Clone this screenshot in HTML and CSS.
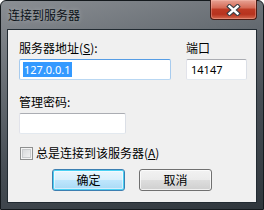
FILE: index.html
```html
<!DOCTYPE html>
<html lang="zh-CN">
<head>
    <meta charset="UTF-8">
    <title>连接到服务器</title>
    <link rel="stylesheet" href="styles.css">
</head>
<body>
    <div class="window">
        <div class="titlebar">
            <span class="title">连接到服务器</span>
            <button class="close" aria-label="关闭">
                <svg width="15" height="12" viewBox="0 0 15 12">
                    <path d="M3.5 2.5 L11.5 9.5 M11.5 2.5 L3.5 9.5" stroke="#3a3f45" stroke-width="4.6" stroke-linecap="square"/>
                    <path d="M3.5 2.5 L11.5 9.5 M11.5 2.5 L3.5 9.5" stroke="#ffffff" stroke-width="2.4" stroke-linecap="square"/>
                </svg>
            </button>
        </div>
        <div class="client">
            <div class="row-top">
                <div class="field">
                    <label class="label">服务器地址(<u>S</u>):</label>
                    <div class="input input-focus input-address"><span class="selected">127.0.0.1</span></div>
                </div>
                <div class="field">
                    <label class="label">端口</label>
                    <div class="input input-port">14147</div>
                </div>
            </div>
            <div class="field field-pass">
                <label class="label">管理密码:</label>
                <div class="input input-pass"></div>
            </div>
            <label class="check-row">
                <span class="checkbox"></span>
                <span class="label">总是连接到该服务器(<u>A</u>)</span>
            </label>
            <div class="buttons">
                <button class="btn btn-default">确定</button>
                <button class="btn">取消</button>
            </div>
        </div>
    </div>
</body>
</html>
```

FILE: styles.css
```css
* {
    box-sizing: border-box;
}
body {
    margin: 0;
    width: 264px;
    height: 210px;
    font-family: "Noto Sans CJK SC", "Microsoft YaHei", sans-serif;
    font-size: 12px;
    color: #000;
    background: #fff;
}
.window {
    width: 264px;
    height: 210px;
    border: 1px solid #14191d;
    border-radius: 6px 6px 0 0;
    padding: 0 6px 6px 6px;
    display: flex;
    flex-direction: column;
    background: linear-gradient(165deg, #8b8f94 0%, #686e74 30%, #474e55 60%, #2f363c 100%);
}
.titlebar {
    height: 28px;
    display: flex;
    justify-content: space-between;
    align-items: flex-start;
}
.title {
    padding-left: 1px;
    line-height: 28px;
    font-size: 12px;
    color: #0c1218;
    text-shadow: 0 0 5px rgba(255, 255, 255, 0.35);
}
.close {
    width: 47px;
    height: 20px;
    margin-top: -1px;
    padding: 0;
    border: 1px solid #4a1d16;
    border-top: none;
    border-radius: 0 0 4px 4px;
    display: flex;
    align-items: center;
    justify-content: center;
    background: linear-gradient(#e7a395 0%, #d56b57 40%, #bd3a24 50%, #b7331e 75%, #d4694f 100%);
    box-shadow: inset 0 0 0 1px rgba(255, 200, 190, 0.35);
}
.client {
    flex: 1;
    border: 1px solid #222b32;
    background: #f0f0f0;
    padding: 10px 0 0 11px;
}
.label {
    display: block;
    line-height: 16px;
    font-size: 12px;
}
.row-top {
    display: flex;
    gap: 15px;
}
.field {
    display: flex;
    flex-direction: column;
}
.field .label {
    margin-bottom: 3px;
}
.input {
    height: 21px;
    background: #fff;
    border: 1px solid;
    border-color: #abadb3 #dbdfe6 #e3e9ef #e2e3ea;
    border-radius: 2px;
    padding: 2px 0 0 3px;
    font-family: "Noto Sans", "Segoe UI", sans-serif;
    font-size: 11px;
    line-height: 15px;
}
.input-focus {
    border-color: #569de5 #a7cbee #b9d7f2 #a7cbee;
}
.input-address {
    width: 152px;
}
.input-port {
    width: 61px;
    padding-left: 4px;
}
.input-pass {
    width: 107px;
}
.selected {
    display: inline-block;
    background: #3399ff;
    color: #fff;
    padding: 0 1px;
}
.field-pass {
    margin-top: 14px;
}
.check-row {
    display: flex;
    align-items: center;
    gap: 3px;
    margin-top: 11px;
}
.checkbox {
    width: 13px;
    height: 13px;
    margin-left: 1px;
    border: 1px solid #8e8f8f;
    background: linear-gradient(135deg, #d2d4d6, #f6f6f6);
    box-shadow: inset 0 0 0 1px #f4f4f4, inset 0 0 0 2px #c9cbcd;
}
.buttons {
    display: flex;
    justify-content: center;
    gap: 14px;
    margin-top: 8px;
    padding-right: 11px;
}
.btn {
    width: 73px;
    height: 22px;
    padding: 0;
    border: 1px solid #707070;
    border-radius: 3px;
    font-family: "Noto Sans CJK SC", "Microsoft YaHei", sans-serif;
    font-size: 12px;
    line-height: 18px;
    color: #000;
    background: linear-gradient(#f2f2f2 0%, #ebebeb 48%, #dddddd 52%, #cfcfcf 100%);
    box-shadow: inset 0 0 0 1px rgba(255, 255, 255, 0.7);
}
.btn-default {
    border-color: #3c7fb1;
    background: linear-gradient(#eaf6fd 0%, #d9f0fc 48%, #bee6fd 52%, #a7d9f5 100%);
    box-shadow: inset 0 0 0 1px #4ad0f3, inset 0 0 0 2px rgba(255, 255, 255, 0.5);
}
```
